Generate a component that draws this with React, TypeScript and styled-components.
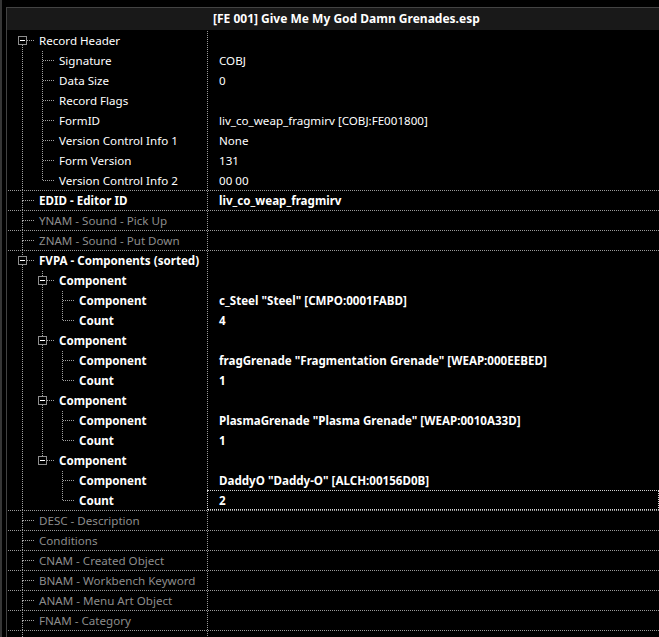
import type { FC } from 'react';
import styled, { createGlobalStyle } from 'styled-components';

type Tone = 'normal' | 'dim';

interface TreeNode {
  name: string;
  value?: string;
  tone?: Tone;
  bold?: boolean;
  focused?: boolean;
  children?: TreeNode[];
}

interface FlatRow {
  node: TreeNode;
  depth: number;
  guides: boolean[];
  firstRoot: boolean;
  last: boolean;
}

const component = (name: string, count: string): TreeNode => ({
  name: 'Component',
  bold: true,
  children: [
    { name: 'Component', value: name, bold: true },
    { name: 'Count', value: count, bold: true, focused: name.startsWith('DaddyO') },
  ],
});

const record: TreeNode[] = [
  {
    name: 'Record Header',
    children: [
      { name: 'Signature', value: 'COBJ' },
      { name: 'Data Size', value: '0' },
      { name: 'Record Flags' },
      { name: 'FormID', value: 'liv_co_weap_fragmirv [COBJ:FE001800]' },
      { name: 'Version Control Info 1', value: 'None' },
      { name: 'Form Version', value: '131' },
      { name: 'Version Control Info 2', value: '00 00' },
    ],
  },
  { name: 'EDID - Editor ID', value: 'liv_co_weap_fragmirv', bold: true },
  { name: 'YNAM - Sound - Pick Up', tone: 'dim' },
  { name: 'ZNAM - Sound - Put Down', tone: 'dim' },
  {
    name: 'FVPA - Components (sorted)',
    bold: true,
    children: [
      component('c_Steel "Steel" [CMPO:0001FABD]', '4'),
      component('fragGrenade "Fragmentation Grenade" [WEAP:000EEBED]', '1'),
      component('PlasmaGrenade "Plasma Grenade" [WEAP:0010A33D]', '1'),
      component('DaddyO "Daddy-O" [ALCH:00156D0B]', '2'),
    ],
  },
  { name: 'DESC - Description', tone: 'dim' },
  { name: 'Conditions', tone: 'dim' },
  { name: 'CNAM - Created Object', tone: 'dim' },
  { name: 'BNAM - Workbench Keyword', tone: 'dim' },
  { name: 'ANAM - Menu Art Object', tone: 'dim' },
  { name: 'FNAM - Category', tone: 'dim' },
  { name: 'INTV - Data', tone: 'dim' },
];

const flatten = (nodes: TreeNode[], depth = 0, guides: boolean[] = []): FlatRow[] =>
  nodes.flatMap((node, i) => {
    // the root list keeps going below the visible area
    const last = depth > 0 && i === nodes.length - 1;
    const row: FlatRow = { node, depth, guides, firstRoot: depth === 0 && i === 0, last };
    const kids = node.children ? flatten(node.children, depth + 1, [...guides, !last]) : [];
    return [row, ...kids];
  });

const GlobalStyle = createGlobalStyle`
  html, body {
    margin: 0;
    background: #000;
    overflow: hidden;
  }
  body {
    font-family: 'Noto Sans', 'Open Sans', sans-serif;
    font-size: 11.6px;
    color: #fff;
  }
`;

const Frame = styled.div`
  display: flex;
  height: 637px;
  overflow: hidden;
`;

const EdgeStrip = styled.div`
  width: 2px;
  background: #363636;
  flex-shrink: 0;
`;

const Panel = styled.div`
  flex: 1;
  margin: 7px 0 0 4px;
  border-top: 1px solid #434343;
  border-left: 1px solid #434343;
  display: flex;
  flex-direction: column;
  min-width: 0;
`;

const Header = styled.div`
  display: flex;
  height: 22px;
  flex-shrink: 0;
  background: #191919;
`;

const HeaderBlank = styled.div`
  width: 200px;
  flex-shrink: 0;
`;

const HeaderTitle = styled.div`
  padding-left: 6px;
  font-size: 12px;
  font-weight: 700;
  line-height: 22px;
  white-space: nowrap;
`;

const Body = styled.div`
  display: flex;
  flex-direction: column;
`;

const Row = styled.div<{ $rule: boolean }>`
  display: flex;
  height: 20px;
  box-sizing: border-box;
  flex-shrink: 0;
  margin-left: 1px;
  border-top: 1px dotted ${({ $rule }) => ($rule ? '#9a9a9a' : 'transparent')};
`;

const NameCell = styled.div`
  width: 199px;
  flex-shrink: 0;
  display: flex;
  padding-left: 4px;
  box-sizing: border-box;
  overflow: hidden;
`;

const Label = styled.span<{ $tone: Tone; $bold: boolean }>`
  line-height: 19px;
  white-space: nowrap;
  color: ${({ $tone }) => ($tone === 'dim' ? '#8c8c8c' : '#ffffff')};
  font-weight: ${({ $bold }) => ($bold ? 700 : 400)};
`;

const ValueCell = styled.div<{ $focused: boolean; $bold: boolean }>`
  flex: 1;
  padding-left: 11px;
  line-height: 19px;
  white-space: nowrap;
  overflow: hidden;
  color: #fff;
  font-weight: ${({ $bold }) => ($bold ? 700 : 400)};
  border-left: 1px dotted #9a9a9a;
  ${({ $focused }) =>
    $focused &&
    `
    border: 1px dotted #d0d0d0;
    margin-top: -1px;
    line-height: 19px;
  `}
`;

const GuideSvg = styled.svg`
  display: block;
  flex-shrink: 0;
`;

const DOTS = { stroke: '#a0a0a0', strokeWidth: 1, strokeDasharray: '1 1' };

const Guide: FC<{ on: boolean; offset: number }> = ({ on, offset }) => (
  <GuideSvg width={20} height={20} viewBox="0 0 20 20" shapeRendering="crispEdges">
    {on && <line x1={10.5} y1={offset} x2={10.5} y2={20} {...DOTS} />}
  </GuideSvg>
);

const Glyph: FC<{ row: FlatRow; offset: number }> = ({ row, offset }) => {
  const expandable = !!row.node.children;
  const top = row.firstRoot ? null : (
    <line x1={10.5} y1={offset} x2={10.5} y2={expandable ? 5 : 10} {...DOTS} />
  );
  const bottom = row.last ? null : (
    <line x1={10.5} y1={expandable ? 14 : 10} x2={10.5} y2={20} {...DOTS} />
  );
  return (
    <GuideSvg width={27} height={20} viewBox="0 0 27 20" shapeRendering="crispEdges">
      {top}
      {bottom}
      <line x1={expandable ? 15 : 11} y1={9.5} x2={23} y2={9.5} {...DOTS} />
      {expandable && (
        <>
          <rect x={6.5} y={5.5} width={8} height={8} fill="#000" stroke="#8e8e8e" />
          <line x1={8} y1={9.5} x2={13} y2={9.5} stroke="#fff" />
        </>
      )}
    </GuideSvg>
  );
};

const App: FC = () => {
  const rows = flatten(record);

  return (
    <>
      <GlobalStyle />
      <Frame>
        <EdgeStrip />
        <Panel>
          <Header>
            <HeaderBlank />
            <HeaderTitle>[FE 001] Give Me My God Damn Grenades.esp</HeaderTitle>
          </Header>
          <Body>
            {rows.map((row, index) => {
              const rule = row.depth === 0 && !row.firstRoot;
              const offset = rule ? 1 : 0;
              return (
                <Row key={index} $rule={rule}>
                  <NameCell>
                    {row.guides.map((on, g) => (
                      <Guide key={g} on={on} offset={offset} />
                    ))}
                    <Glyph row={row} offset={offset} />
                    <Label $tone={row.node.tone ?? 'normal'} $bold={!!row.node.bold}>
                      {row.node.name}
                    </Label>
                  </NameCell>
                  <ValueCell $focused={!!row.node.focused} $bold={!!row.node.bold}>
                    {row.node.value}
                  </ValueCell>
                </Row>
              );
            })}
          </Body>
        </Panel>
      </Frame>
    </>
  );
};

export default App;
